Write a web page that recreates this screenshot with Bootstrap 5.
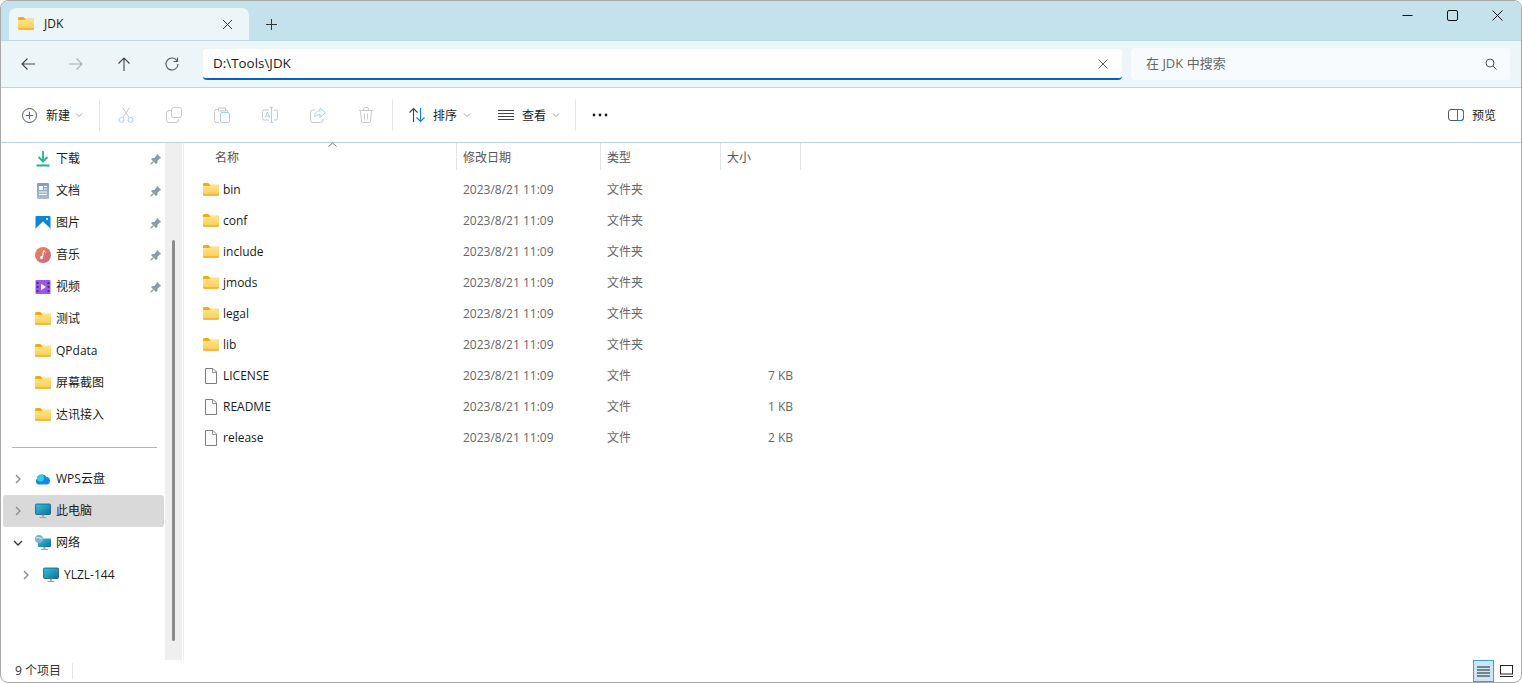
<!DOCTYPE html>
<html lang="zh-CN">
<head>
    <meta charset="UTF-8">
    <meta name="viewport" content="width=device-width, initial-scale=1.0">
    <title>JDK</title>
    <link href="https://cdn.jsdelivr.net/npm/bootstrap@5.3.0/dist/css/bootstrap.min.css" rel="stylesheet">
    <style>
        html, body {
            height: 100%;
            overflow: hidden;
            background: #fff;
        }
        body {
            font-family: "Open Sans", "Noto Sans CJK SC", sans-serif;
            font-size: 12px;
            color: #1a1a1a;
        }
        svg {
            display: block;
            flex: none;
        }
        .win {
            height: 683px;
            border: 1px solid #a9a9a9;
            border-radius: 8px;
            overflow: hidden;
        }
        .title-bar {
            height: 39px;
            background: #c3e2ec;
            padding: 7px 1px 0 8px;
        }
        .tab-item {
            width: 240px;
            height: 32px;
            background: #ecf5f8;
            border-radius: 7px 7px 0 0;
            padding: 0 16px 0 9px;
            gap: 10px;
        }
        .tab-add {
            height: 32px;
            margin-left: 17px;
        }
        .win-btn {
            width: 45px;
            height: 30px;
            margin-top: -8px;
        }
        .addr-bar {
            height: 48px;
            background: #ecf5f8;
            border-top: 1px solid #bcdbe5;
            border-bottom: 1px solid #bfd6dd;
            padding-left: 3px;
        }
        .nav-btn {
            width: 48px;
        }
        .addr-box {
            width: 919px;
            height: 31px;
            margin-left: 7px;
            background: #fff;
            border-bottom: 2px solid #0067c0;
            border-radius: 4px;
            padding: 1px 14px 0 10px;
            font-size: 13.4px;
        }
        .search-box {
            width: 379px;
            height: 32px;
            margin-left: 9px;
            background: #f8fbfd;
            border-radius: 4px;
            padding: 0 13px 0 15px;
            font-size: 13px;
            color: #666;
        }
        .tool-bar {
            height: 55px;
            border-bottom: 1px solid #b5d5de;
            padding-right: 24px;
        }
        .tool-sep {
            width: 1px;
            height: 32px;
            background: #e6e6e6;
        }
        .tool-new {
            width: 98px;
            padding-left: 21px;
        }
        .tool-sort {
            width: 105px;
            padding-left: 16px;
        }
        .tool-view {
            width: 77px;
        }
        .tool-ico {
            width: 48px;
        }
        .tool-first {
            margin-left: 2px;
        }
        .tool-txt {
            width: 25px;
            margin: 1px 5px 0 8px;
            white-space: nowrap;
        }
        .tool-new .tool-txt {
            margin: 1px 4px 0 9px;
        }
        .main-area {
            height: 517px;
        }
        .side-pane {
            width: 164px;
            padding: 0 1px 0 2px;
        }
        .side-row {
            height: 32px;
            border-radius: 3px;
            padding-right: 1px;
        }
        .side-row.is-active {
            background: #d9d9d9;
        }
        .side-chev {
            width: 32px;
            padding-left: 10px;
        }
        .side-ico {
            width: 21px;
        }
        .side-indent {
            padding-left: 8px;
        }
        .side-gap {
            height: 32px;
            padding: 0 7px 0 9px;
        }
        .side-gap hr {
            width: 100%;
            margin: 0;
            border-top: 1px solid #b5b5b5;
            opacity: 1;
        }
        .side-pin {
            margin-left: auto;
            margin-right: 1px;
        }
        .scroll-track {
            width: 17px;
            background: #efefef;
            padding: 97px 0 0 7px;
        }
        .scroll-thumb {
            width: 3px;
            height: 401px;
            background: #8b8b8b;
            border-radius: 2px;
        }
        .file-pane {
            margin-left: 1px;
            border-left: 1px solid #f0f0f0;
        }
        .file-grid {
            display: grid;
            grid-template-columns: 273px 144px 120px 80px;
            width: 617px;
        }
        .col-head {
            height: 27px;
            padding: 1px 0 0 6px;
            border-right: 1px solid #e3e3e3;
            color: #555;
            line-height: 27px;
            position: relative;
        }
        .col-head:first-child {
            padding-left: 31px;
        }
        .sort-caret {
            position: absolute;
            left: 144px;
            top: -1px;
        }
        .file-cell {
            height: 31px;
            line-height: 31px;
            padding-left: 6px;
            color: #666;
        }
        .file-name {
            padding-left: 19px;
            color: #1a1a1a;
            gap: 4px;
        }
        .file-size {
            padding: 0 8px 0 0;
            text-align: right;
        }
        .head-space {
            height: 4px;
            grid-column: 1 / 5;
        }
        .status-bar {
            height: 22px;
            padding-left: 14px;
            color: #333;
        }
        .status-sep {
            width: 1px;
            height: 16px;
            margin-left: 11px;
            background: #e6e6e6;
        }
        .view-btn {
            width: 21px;
            height: 22px;
            margin-right: 2px;
        }
        .view-btn.is-on {
            background: #cde6f7;
            border: 1px solid #3aa0d8;
        }
        .view-last {
            margin-right: 4px;
        }
    </style>
</head>
<body>
    <svg width="0" height="0" class="position-absolute">
        <defs>
            <linearGradient id="gFolder" x1="0" y1="0" x2="0" y2="1">
                <stop offset="0" stop-color="#ffe58c"/>
                <stop offset="1" stop-color="#fbcb53"/>
            </linearGradient>
            <linearGradient id="gScreen" x1="0" y1="0" x2="1" y2="1">
                <stop offset="0" stop-color="#35c3dc"/>
                <stop offset="1" stop-color="#0f6f9c"/>
            </linearGradient>
            <linearGradient id="gDoc" x1="0" y1="0" x2="0" y2="1">
                <stop offset="0" stop-color="#7f9cc0"/>
                <stop offset="1" stop-color="#a8bdd4"/>
            </linearGradient>
            <linearGradient id="gMusic" x1="0" y1="0" x2="1" y2="1">
                <stop offset="0" stop-color="#ee8a4c"/>
                <stop offset="1" stop-color="#c4638f"/>
            </linearGradient>
            <symbol id="folder" viewBox="0 0 16 16">
                <path d="M0 2.500C0 1.700.6 1 1.400 1h3.800l2 1.800H15c.6 0 1 .4 1 1V4H0z" fill="#f2ac10"/>
                <path d="M0 4.200l6.500-.1L8 2.900h6.800c.7 0 1.200.5 1.200 1.200v8.500c0 .7-.5 1.200-1.200 1.200H1.200C.5 13.800 0 13.300 0 12.600z" fill="url(#gFolder)"/>
                <path d="M0 12.600c0 .7.500 1.200 1.200 1.200h13.600c.7 0 1.200-.5 1.200-1.200v-.4H0z" fill="#eeb130"/>
            </symbol>
            <symbol id="page" viewBox="0 0 16 16">
                <path d="M2.500.5h7.500l3.500 3.500v11.500h-11z" fill="#fbfbfb" stroke="#7c7c7c"/>
                <path d="M9.500.5v4h4" fill="none" stroke="#9a9a9a"/>
            </symbol>
            <symbol id="pin" viewBox="0 0 12 12">
                <path d="M7 .8l4.200 4.200-1.300.6-2.300 2.200-.2 2.200L5.900 11 1 6.100l.9-.9 2.200-.2 2.300-2.300z" fill="#8e9aa3"/>
                <path d="M3.200 8.800L.6 11.400" stroke="#8e9aa3" stroke-width="1.300"/>
            </symbol>
            <symbol id="chev-r" viewBox="0 0 10 10">
                <path d="M3 1l4 4-4 4" fill="none" stroke="#8a8a8a" stroke-width="1.300"/>
            </symbol>
            <symbol id="chev-d" viewBox="0 0 8 8">
                <path d="M1 2.500l3 3 3-3" fill="none" stroke="#a0a0a0" stroke-width="1"/>
            </symbol>
            <symbol id="screen" viewBox="0 0 16 16">
                <rect x=".5" y="1" width="15" height="10.500" rx="1" fill="url(#gScreen)" stroke="#17587c" stroke-width=".8"/>
                <path d="M7 11.800h2v2H7zM4.500 14h7v1h-7z" fill="#8fa4b0"/>
            </symbol>
        </defs>
    </svg>

    <div class="win d-flex flex-column">
        <div class="title-bar d-flex align-items-start">
            <div class="tab-item d-flex align-items-center">
                <svg width="16" height="16"><use href="#folder"/></svg>
                <span class="flex-grow-1">JDK</span>
                <svg width="11" height="11" viewBox="0 0 11 11"><path d="M1 1l9 9M10 1l-9 9" stroke="#333" stroke-width="1"/></svg>
            </div>
            <div class="tab-add d-flex align-items-center">
                <svg width="11" height="11" viewBox="0 0 11 11"><path d="M5.500 0v11M0 5.500h11" stroke="#333" stroke-width="1"/></svg>
            </div>
            <div class="ms-auto d-flex">
                <div class="win-btn d-flex align-items-center justify-content-center"><svg width="11" height="11" viewBox="0 0 11 11"><path d="M.5 5.500h10" stroke="#111"/></svg></div>
                <div class="win-btn d-flex align-items-center justify-content-center"><svg width="11" height="11" viewBox="0 0 11 11"><rect x=".5" y=".5" width="10" height="10" rx="1.500" fill="none" stroke="#111"/></svg></div>
                <div class="win-btn d-flex align-items-center justify-content-center"><svg width="11" height="11" viewBox="0 0 11 11"><path d="M.5.500l10 10M10.500.500l-10 10" stroke="#111"/></svg></div>
            </div>
        </div>

        <div class="addr-bar d-flex align-items-center">
            <div class="nav-btn d-flex justify-content-center"><svg width="16" height="16" viewBox="0 0 16 16"><path d="M15 8H2M7.500 2.500L2 8l5.500 5.500" fill="none" stroke="#444" stroke-width="1.100"/></svg></div>
            <div class="nav-btn d-flex justify-content-center"><svg width="16" height="16" viewBox="0 0 16 16"><path d="M1 8h13M8.500 2.500L14 8l-5.500 5.500" fill="none" stroke="#a9b2b6" stroke-width="1.100"/></svg></div>
            <div class="nav-btn d-flex justify-content-center"><svg width="16" height="16" viewBox="0 0 16 16"><path d="M8 15V2M2.500 7.500L8 2l5.500 5.500" fill="none" stroke="#444" stroke-width="1.100"/></svg></div>
            <div class="nav-btn d-flex justify-content-center"><svg width="16" height="16" viewBox="0 0 16 16"><path d="M13.200 5A6 6 0 1 0 14 8" fill="none" stroke="#555" stroke-width="1.100"/><path d="M13.500 1.500V5.500H9.500" fill="none" stroke="#555" stroke-width="1.100"/></svg></div>
            <div class="addr-box d-flex align-items-center justify-content-between">
                <span>D:\Tools\JDK</span>
                <svg width="10" height="10" viewBox="0 0 10 10"><path d="M.5.500l9 9M9.500.500l-9 9" stroke="#666"/></svg>
            </div>
            <div class="search-box d-flex align-items-center justify-content-between">
                <span>在 JDK 中搜索</span>
                <svg width="12" height="12" viewBox="0 0 12 12"><circle cx="5" cy="5" r="4" fill="none" stroke="#555"/><path d="M8 8l3.500 3.500" stroke="#555"/></svg>
            </div>
        </div>

        <div class="tool-bar d-flex align-items-center">
            <div class="tool-new d-flex align-items-center">
                <svg width="15" height="15" viewBox="0 0 15 15"><circle cx="7.500" cy="7.500" r="7" fill="none" stroke="#555"/><path d="M7.500 3.800v7.400M3.800 7.500h7.400" stroke="#0f7ed6" stroke-width="1.100"/></svg>
                <span class="tool-txt">新建</span>
                <svg width="8" height="8"><use href="#chev-d"/></svg>
            </div>
            <div class="tool-sep"></div>
            <div class="tool-ico tool-first d-flex justify-content-center"><svg width="16" height="16" viewBox="0 0 16 16"><circle cx="3.500" cy="13" r="2.500" fill="none" stroke="#a9d0ee"/><circle cx="12.500" cy="13" r="2.500" fill="none" stroke="#a9d0ee"/><path d="M4.800 10.800L11.500.5M11.200 10.800L4.500.5" stroke="#c6c6c6"/></svg></div>
            <div class="tool-ico d-flex justify-content-center"><svg width="16" height="16" viewBox="0 0 16 16"><rect x="5.500" y=".5" width="10" height="10" rx="2" fill="#fff" stroke="#a9d0ee"/><path d="M5 3.500H3a2.500 2.500 0 0 0-2.500 2.500v7a2.500 2.500 0 0 0 2.500 2.500h7a2.500 2.500 0 0 0 2.500-2.500v-1" fill="none" stroke="#c6c6c6"/></svg></div>
            <div class="tool-ico d-flex justify-content-center"><svg width="16" height="16" viewBox="0 0 16 16"><path d="M5 2.500H2.500a2 2 0 0 0-2 2v9a2 2 0 0 0 2 2H5M11 2.500h.500a2 2 0 0 1 2 2V5M4.500 1h7v3h-7z" fill="none" stroke="#c6c6c6"/><rect x="6.500" y="5.500" width="9" height="10" rx="1.500" fill="#fff" stroke="#a9d0ee"/></svg></div>
            <div class="tool-ico d-flex justify-content-center"><svg width="16" height="16" viewBox="0 0 16 16"><path d="M7 3H2a1.500 1.500 0 0 0-1.500 1.500v7A1.500 1.500 0 0 0 2 13h5M12 3h2a1.500 1.500 0 0 1 1.500 1.500v7A1.500 1.500 0 0 1 14 13h-2" fill="none" stroke="#c6c6c6"/><path d="M3 10.500l2.300-5.500 2.300 5.500M3.800 9h3M9.500.5v15M7.800.5h3.400M7.800 15.500h3.400" fill="none" stroke="#a9d0ee"/></svg></div>
            <div class="tool-ico d-flex justify-content-center"><svg width="16" height="16" viewBox="0 0 16 16"><path d="M5 3H3A2.500 2.500 0 0 0 .5 5.500v7.500A2.500 2.500 0 0 0 3 15.500h7.500A2.500 2.500 0 0 0 13 13v-1" fill="none" stroke="#c6c6c6"/><path d="M10 1v3C6.500 4 4.500 6 4.500 10 6 8 8 7.500 10 7.500v3L15.500 5.800z" fill="#fff" stroke="#a9d0ee"/></svg></div>
            <div class="tool-ico d-flex justify-content-center"><svg width="16" height="16" viewBox="0 0 16 16"><path d="M1 3.500h14M5.500 3.500V2a1.500 1.500 0 0 1 1.500-1.500h2A1.500 1.500 0 0 1 10.500 2v1.500M2.500 3.500l1 10.500a1.500 1.500 0 0 0 1.500 1.500h6a1.500 1.500 0 0 0 1.500-1.500l1-10.500M6.500 6.500v6M9.500 6.500v6" fill="none" stroke="#c9c9c9"/></svg></div>
            <div class="tool-sep tool-first"></div>
            <div class="tool-sort d-flex align-items-center">
                <svg width="16" height="16" viewBox="0 0 16 16"><path d="M4.500 15V1.500M.5 5.500l4-4 4 4" fill="none" stroke="#444" stroke-width="1.100"/><path d="M11.500 1v13.500M7.500 10.500l4 4 4-4" fill="none" stroke="#0f7ed6" stroke-width="1.100"/></svg>
                <span class="tool-txt">排序</span>
                <svg width="8" height="8"><use href="#chev-d"/></svg>
            </div>
            <div class="tool-view d-flex align-items-center">
                <svg width="16" height="16" viewBox="0 0 16 16"><path d="M0 3.500h16M0 6.500h16M0 9.500h16M0 12.500h16" stroke="#444" stroke-width="1"/></svg>
                <span class="tool-txt">查看</span>
                <svg width="8" height="8"><use href="#chev-d"/></svg>
            </div>
            <div class="tool-sep"></div>
            <div class="ms-3">
                <svg width="16" height="4" viewBox="0 0 16 4"><circle cx="2" cy="2" r="1.400" fill="#222"/><circle cx="8" cy="2" r="1.400" fill="#222"/><circle cx="14" cy="2" r="1.400" fill="#222"/></svg>
            </div>
            <div class="ms-auto d-flex align-items-center">
                <svg width="16" height="12" viewBox="0 0 16 12"><rect x=".5" y=".5" width="15" height="11" rx="2.500" fill="none" stroke="#555"/><path d="M9.500 .5h3.500a2.500 2.500 0 0 1 2.500 2.500v6a2.500 2.500 0 0 1-2.500 2.500H9.500z" fill="none" stroke="#0f7ed6"/></svg>
                <span class="tool-txt me-0">预览</span>
            </div>
        </div>

        <div class="main-area d-flex">
            <div class="side-pane">
                <div class="side-row d-flex align-items-center"><span class="side-chev"></span><span class="side-ico"><svg width="16" height="16" viewBox="0 0 16 16"><path d="M8 0v10M3.500 6L8 10.500 12.500 6" fill="none" stroke="#1fb58f" stroke-width="1.800"/><path d="M1.500 14.500h13" stroke="#1fb58f" stroke-width="1.800"/></svg></span><span>下载</span><svg class="side-pin" width="12" height="12"><use href="#pin"/></svg></div>
                <div class="side-row d-flex align-items-center"><span class="side-chev"></span><span class="side-ico"><svg width="16" height="16" viewBox="0 0 16 16"><rect x="2" y="0" width="12" height="16" rx="1" fill="url(#gDoc)"/><path d="M4 3h4v4H4zM9 3h3v1H9zM9 5.500h3v1H9zM4 8.500h8v1H4zM4 11h8v1H4z" fill="#fff"/></svg></span><span>文档</span><svg class="side-pin" width="12" height="12"><use href="#pin"/></svg></div>
                <div class="side-row d-flex align-items-center"><span class="side-chev"></span><span class="side-ico"><svg width="16" height="16" viewBox="0 0 16 16"><rect x=".5" y="1" width="15" height="14" rx="1" fill="#1383d8"/><path d="M.5 13.500L8 6.500l7.500 7v1.500H.5z" fill="#fff"/><circle cx="12" cy="4" r="1" fill="#fff"/></svg></span><span>图片</span><svg class="side-pin" width="12" height="12"><use href="#pin"/></svg></div>
                <div class="side-row d-flex align-items-center"><span class="side-chev"></span><span class="side-ico"><svg width="16" height="16" viewBox="0 0 16 16"><circle cx="8" cy="8" r="8" fill="url(#gMusic)"/><path d="M8.500 3.500l-.9 6.500" stroke="#fff" stroke-width="1.100"/><path d="M8.500 3.500c1 .5 1.800 1 2 2" fill="none" stroke="#fff" stroke-width="1"/><circle cx="6.500" cy="10.500" r="1.500" fill="#fff"/></svg></span><span>音乐</span><svg class="side-pin" width="12" height="12"><use href="#pin"/></svg></div>
                <div class="side-row d-flex align-items-center"><span class="side-chev"></span><span class="side-ico"><svg width="16" height="16" viewBox="0 0 16 16"><rect x=".5" y="1" width="15" height="14" rx="1" fill="#9a58e8"/><path d="M1.500 3h2v2h-2zM1.500 7h2v2h-2zM1.500 11h2v2h-2zM12.500 3h2v2h-2zM12.500 7h2v2h-2zM12.500 11h2v2h-2z" fill="#4a2a92"/><path d="M6 4.800l5 3.200-5 3.200z" fill="#fff"/></svg></span><span>视频</span><svg class="side-pin" width="12" height="12"><use href="#pin"/></svg></div>
                <div class="side-row d-flex align-items-center"><span class="side-chev"></span><span class="side-ico"><svg width="16" height="16"><use href="#folder"/></svg></span><span>测试</span></div>
                <div class="side-row d-flex align-items-center"><span class="side-chev"></span><span class="side-ico"><svg width="16" height="16"><use href="#folder"/></svg></span><span>QPdata</span></div>
                <div class="side-row d-flex align-items-center"><span class="side-chev"></span><span class="side-ico"><svg width="16" height="16"><use href="#folder"/></svg></span><span>屏幕截图</span></div>
                <div class="side-row d-flex align-items-center"><span class="side-chev"></span><span class="side-ico"><svg width="16" height="16"><use href="#folder"/></svg></span><span>达讯接入</span></div>
                <div class="side-gap d-flex align-items-center"><hr></div>
                <div class="side-row d-flex align-items-center"><span class="side-chev"><svg width="10" height="10"><use href="#chev-r"/></svg></span><span class="side-ico"><svg width="16" height="16" viewBox="0 0 16 16"><path d="M4 13.500a3.300 3.300 0 0 1-.5-6.500 4.200 4.200 0 0 1 8-1 3.800 3.800 0 0 1 .5 7.500z" fill="#1489ea"/><circle cx="5.500" cy="7" r="3.500" fill="#2ed3d8"/></svg></span><span>WPS云盘</span></div>
                <div class="side-row is-active d-flex align-items-center"><span class="side-chev"><svg width="10" height="10"><use href="#chev-r"/></svg></span><span class="side-ico"><svg width="16" height="16"><use href="#screen"/></svg></span><span>此电脑</span></div>
                <div class="side-row d-flex align-items-center"><span class="side-chev"><svg width="10" height="10" viewBox="0 0 10 10"><path d="M1 3l4 4 4-4" fill="none" stroke="#333" stroke-width="1.300"/></svg></span><span class="side-ico"><svg width="16" height="16" viewBox="0 0 16 16"><rect x="3" y="3.500" width="13" height="8.500" rx="1" fill="url(#gScreen)"/><path d="M8.500 12h2v2h-2zM6 14h7v1H6z" fill="#8fa4b0"/><circle cx="4" cy="4" r="4" fill="#7fb2d4"/><path d="M1 3c2-1 4 0 6 1" stroke="#dcebf4" fill="none"/></svg></span><span>网络</span></div>
                <div class="side-row side-indent d-flex align-items-center"><span class="side-chev"><svg width="10" height="10"><use href="#chev-r"/></svg></span><span class="side-ico"><svg width="16" height="16"><use href="#screen"/></svg></span><span>YLZL-144</span></div>
            </div>
            <div class="scroll-track"><div class="scroll-thumb"></div></div>
            <div class="file-pane flex-grow-1">
                <div class="file-grid">
                    <div class="col-head">名称<svg class="sort-caret" width="9" height="6" viewBox="0 0 9 6"><path d="M.5 4.500l4-3.500 4 3.500" fill="none" stroke="#777"/></svg></div>
                    <div class="col-head">修改日期</div>
                    <div class="col-head">类型</div>
                    <div class="col-head">大小</div>
                    <div class="head-space"></div>

                    <div class="file-cell file-name d-flex align-items-center"><svg width="16" height="16"><use href="#folder"/></svg>bin</div><div class="file-cell">2023/8/21 11:09</div><div class="file-cell">文件夹</div><div class="file-cell file-size"></div>
                    <div class="file-cell file-name d-flex align-items-center"><svg width="16" height="16"><use href="#folder"/></svg>conf</div><div class="file-cell">2023/8/21 11:09</div><div class="file-cell">文件夹</div><div class="file-cell file-size"></div>
                    <div class="file-cell file-name d-flex align-items-center"><svg width="16" height="16"><use href="#folder"/></svg>include</div><div class="file-cell">2023/8/21 11:09</div><div class="file-cell">文件夹</div><div class="file-cell file-size"></div>
                    <div class="file-cell file-name d-flex align-items-center"><svg width="16" height="16"><use href="#folder"/></svg>jmods</div><div class="file-cell">2023/8/21 11:09</div><div class="file-cell">文件夹</div><div class="file-cell file-size"></div>
                    <div class="file-cell file-name d-flex align-items-center"><svg width="16" height="16"><use href="#folder"/></svg>legal</div><div class="file-cell">2023/8/21 11:09</div><div class="file-cell">文件夹</div><div class="file-cell file-size"></div>
                    <div class="file-cell file-name d-flex align-items-center"><svg width="16" height="16"><use href="#folder"/></svg>lib</div><div class="file-cell">2023/8/21 11:09</div><div class="file-cell">文件夹</div><div class="file-cell file-size"></div>
                    <div class="file-cell file-name d-flex align-items-center"><svg width="16" height="16"><use href="#page"/></svg>LICENSE</div><div class="file-cell">2023/8/21 11:09</div><div class="file-cell">文件</div><div class="file-cell file-size">7 KB</div>
                    <div class="file-cell file-name d-flex align-items-center"><svg width="16" height="16"><use href="#page"/></svg>README</div><div class="file-cell">2023/8/21 11:09</div><div class="file-cell">文件</div><div class="file-cell file-size">1 KB</div>
                    <div class="file-cell file-name d-flex align-items-center"><svg width="16" height="16"><use href="#page"/></svg>release</div><div class="file-cell">2023/8/21 11:09</div><div class="file-cell">文件</div><div class="file-cell file-size">2 KB</div>
                </div>
            </div>
        </div>

        <div class="status-bar d-flex align-items-center">
            <span>9 个项目</span>
            <div class="status-sep"></div>
            <div class="ms-auto d-flex align-items-center">
                <div class="view-btn is-on d-flex align-items-center justify-content-center"><svg width="13" height="11" viewBox="0 0 13 11"><path d="M0 1h13M0 4h13M0 7h13M0 10h13" stroke="#222"/></svg></div>
                <div class="view-btn view-last d-flex align-items-center justify-content-center"><svg width="13" height="12" viewBox="0 0 13 12"><rect x=".5" y=".5" width="12" height="8.500" fill="none" stroke="#222"/><path d="M0 11.500h13" stroke="#222"/></svg></div>
            </div>
        </div>
    </div>
    <script src="https://cdn.jsdelivr.net/npm/bootstrap@5.3.0/dist/js/bootstrap.bundle.min.js"></script>
</body>
</html>
